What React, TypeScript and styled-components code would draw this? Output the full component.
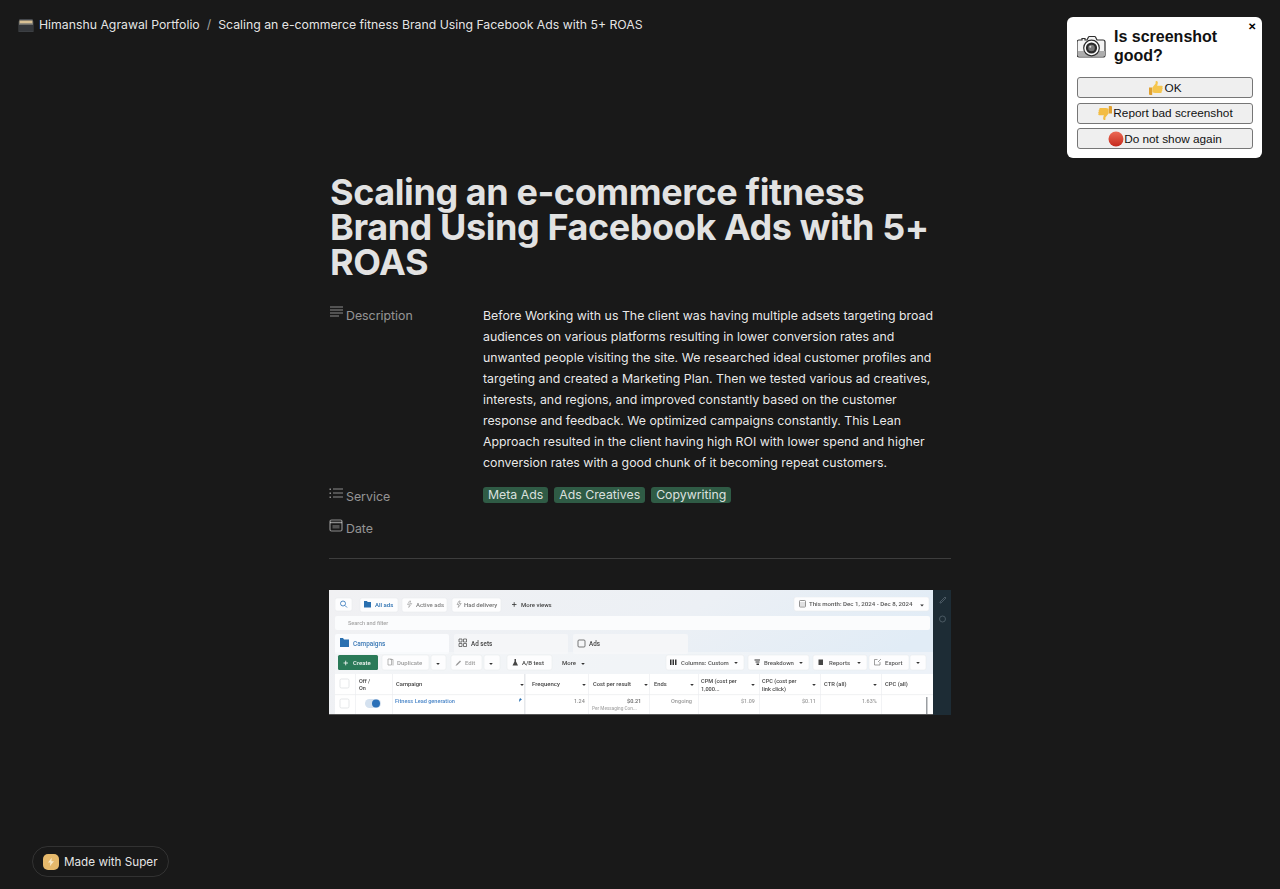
import React from "react";
import styled, { createGlobalStyle } from "styled-components";

const Global = createGlobalStyle`
  html, body { margin: 0; padding: 0; background: #191919; }
  body { min-height: 889px; font-family: Inter, "Liberation Sans", sans-serif; color: rgba(255,255,255,.87); overflow: hidden; }
`;

const Page = styled.div`
  height: 889px;
  display: flex;
  flex-direction: column;
  position: relative;
`;

const TopBar = styled.header`
  display: flex;
  align-items: center;
  height: 48px;
  padding-left: 18px;
  font-size: 12.28px;
  color: rgba(255, 255, 255, 0.9);
  white-space: nowrap;
`;

const Crumb = styled.span`
  margin-left: 5px;
`;

const Slash = styled.span`
  margin: 0 7px;
  color: rgba(255, 255, 255, 0.6);
`;

const Main = styled.main`
  width: 622px;
  margin: 0 0 0 329px;
  padding-top: 127px;
`;

const Title = styled.h1`
  margin: 0 0 24px;
  padding-left: 1px;
  font-size: 36px;
  line-height: 35px;
  font-weight: 700;
  color: rgba(255, 255, 255, 0.88);
  letter-spacing: -0.42px;
`;

const PropRow = styled.div<{ $mb: number }>`
  display: grid;
  grid-template-columns: 154px 1fr;
  margin-bottom: ${(p) => p.$mb}px;
`;

const PropLabel = styled.div`
  display: flex;
  align-items: flex-start;
  gap: 3px;
  padding-top: 1px;
  font-size: 12.35px;
  line-height: 21px;
  color: rgba(255, 255, 255, 0.55);
`;

const PropIcon = styled.svg`
  width: 14px;
  height: 14px;
  flex: none;
  margin-top: 1px;
  color: rgba(255, 255, 255, 0.5);
`;

const PropText = styled.div`
  padding-top: 0.5px;
  font-size: 12.33px;
  line-height: 21px;
  color: rgba(255, 255, 255, 0.92);
`;

const Tags = styled.div`
  display: flex;
  gap: 6px;
  padding-top: 2.5px;
`;

const Tag = styled.span`
  height: 16px;
  display: flex;
  align-items: center;
  padding: 0 5px;
  border-radius: 3px;
  background: #2f5b45;
  color: rgba(255, 255, 255, 0.84);
  font-size: 12.3px;
  line-height: 16px;
`;

const Divider = styled.hr`
  margin: 0 0 31px;
  border: 0;
  height: 1px;
  background: rgba(255, 255, 255, 0.16);
`;

const Shot = styled.svg`
  display: block;
  width: 622px;
  height: 125px;
`;

const Pill = styled.div`
  position: absolute;
  left: 32px;
  top: 846px;
  box-sizing: border-box;
  height: 31px;
  width: 137px;
  display: flex;
  align-items: center;
  gap: 5px;
  padding-left: 10px;
  border: 1px solid rgba(255, 255, 255, 0.11);
  border-radius: 16px;
  font-size: 11.7px;
  white-space: nowrap;
  color: rgba(255, 255, 255, 0.9);
`;

const Bolt = styled.span`
  width: 16px;
  height: 16px;
  display: flex;
  align-items: center;
  justify-content: center;
  border-radius: 5px;
  background: #e6b96c;
`;

const Popup = styled.aside`
  position: absolute;
  left: 1067px;
  top: 17px;
  box-sizing: border-box;
  width: 195px;
  height: 141px;
  padding: 9px 9px 0 10px;
  background: #fff;
  border-radius: 6px;
  font-family: "Liberation Sans", Arial, sans-serif;
  color: #000;
`;

const Close = styled.span`
  position: absolute;
  right: 6px;
  top: 4px;
  font-size: 9.5px;
  line-height: 12px;
  font-weight: 700;
`;

const PopHead = styled.div`
  display: flex;
  align-items: center;
  gap: 8px;
  height: 40px;
  margin-bottom: 11px;
`;

const PopTitle = styled.div`
  font-size: 16px;
  line-height: 19px;
  font-weight: 700;
  color: #111;
`;

const PopButton = styled.button`
  display: flex;
  align-items: center;
  justify-content: center;
  box-sizing: border-box;
  width: 176px;
  height: 21px;
  margin: 0 0 4.5px;
  padding: 0;
  background: #efefef;
  border: 1px solid #767676;
  border-radius: 3px;
  font-family: inherit;
  font-size: 11.8px;
  color: #111;
`;

const Emoji = styled.svg`
  width: 16px;
  height: 16px;
  flex: none;
`;

const ThumbUp = () => (
  <Emoji viewBox="0 0 16 16">
    <path d="M1 7.500h3.200v7.500H2a1 1 0 0 1-1-1z" fill="#e0a030" />
    <path
      d="M4.400 7.500 7.600 3.600V1.500c0-.8 1.900-.8 2.200.6.200 1.200-.4 2.800-.7 3.700h4.600c1.200 0 1.400 1.500.5 1.900.8.500.6 1.700-.2 1.900.6.500.4 1.600-.4 1.800.4.600.1 1.500-.8 1.500H7.200c-1 0-1.800-.5-2.800-.7z"
      fill="#f5c64f"
    />
  </Emoji>
);

const ThumbDown = () => (
  <Emoji viewBox="0 0 16 16">
    <path d="M15 8.500h-3.200V1H14a1 1 0 0 1 1 1z" fill="#e0a030" />
    <path
      d="M11.600 8.500 8.400 12.400v2.100c0 .8-1.900.8-2.200-.6-.2-1.200.4-2.800.7-3.700H2.300c-1.200 0-1.400-1.500-.5-1.900-.8-.5-.6-1.700.2-1.900-.6-.5-.4-1.600.4-1.800-.4-.6-.1-1.500.8-1.500h5.600c1 0 1.800.5 2.800.7z"
      fill="#f3bd45"
    />
  </Emoji>
);

const T = styled.text`
  font-family: Roboto, "Liberation Sans", sans-serif;
  font-weight: 500;
`;

type Lbl = [number, number, string, number, string];

const labels: Lbl[] = [
  [46, 16.5, "All ads", 6, "#2a6fb0"],
  [87, 16.5, "Active ads", 6, "#808080"],
  [135, 16.5, "Had delivery", 6, "#707070"],
  [192, 16.5, "More views", 6, "#444"],
  [19, 35, "Search and filter", 5.5, "#a5a5a5"],
  [24, 55.5, "Campaigns", 6.4, "#3a78b5"],
  [142, 56, "Ad sets", 6.3, "#444"],
  [260, 56, "Ads", 6.3, "#444"],
  [24, 75, "Create", 6, "#f2f8f4"],
  [68, 75, "Duplicate", 6, "#9c9c9c"],
  [136, 75, "Edit", 6, "#a0a0a0"],
  [193, 75, "A/B test", 6, "#444"],
  [233, 75, "More", 6, "#444"],
  [30, 92.5, "Off /", 5.5, "#444"],
  [30, 100, "On", 5.5, "#444"],
  [67, 96, "Campaign", 5.8, "#444"],
  [203, 96, "Frequency", 6, "#444"],
  [264, 96, "Cost per result", 5.8, "#444"],
  [325, 96, "Ends", 5.8, "#444"],
  [372, 92.5, "CPM (cost per", 5.6, "#444"],
  [372, 100.5, "1,000...", 5.6, "#444"],
  [433, 92.5, "CPC (cost per", 5.6, "#444"],
  [433, 100.5, "link click)", 5.6, "#444"],
  [495, 96, "CTR (all)", 5.8, "#444"],
  [556, 96, "CPC (all)", 5.8, "#444"],
  [66, 112.5, "Fitness Lead generation", 5.6, "#4a86c8"],
  [245, 112.5, "1.24", 5.4, "#888"],
  [298, 112.5, "$0.21", 5.6, "#666"],
  [263, 119.8, "Per Messaging Con...", 4.7, "#aaa"],
  [342, 112.5, "Ongoing", 5.6, "#999"],
  [412, 112.5, "$1.09", 5.4, "#999"],
  [473, 112.5, "$0.11", 5.4, "#999"],
  [533, 112.5, "1.63%", 5.4, "#999"],
  [480, 16, "This month: Dec 1, 2024 - Dec 8, 2024", 6.1, "#555"],
  [352, 75, "Columns: Custom", 6, "#555"],
  [435, 75, "Breakdown", 6, "#555"],
  [500, 75, "Reports", 6, "#555"],
  [556, 75, "Export", 6, "#555"],
];

const buttons: [number, number, number, number][] = [
  [6, 8, 17, 13],
  [31, 8, 38, 14],
  [73, 8, 45, 14],
  [123, 8, 49, 14],
  [53, 65, 47, 15],
  [102, 65, 15, 15],
  [122, 65, 31, 15],
  [155, 65, 16, 15],
  [178, 65, 45, 15],
  [465, 7, 135, 14],
  [337, 65, 78, 15],
  [419, 65, 61, 15],
  [484, 65, 54, 15],
  [540, 65, 40, 15],
  [581, 65, 16, 15],
];

const carets: [number, number][] = [
  [109, 73], [162, 73], [254, 73], [593, 14.5], [407, 72], [472, 72], [530, 72], [589, 72],
  [193, 94], [255, 94], [317, 94], [363, 94], [424, 94], [485, 94], [546, 94],
];

const Screenshot = () => (
  <Shot viewBox="0 0 622 125">
    <defs>
      <linearGradient id="bg" x1="0" x2="1" y1="0" y2="0.3">
        <stop offset="0" stopColor="#f1f1f3" />
        <stop offset="0.6" stopColor="#ecf0f5" />
        <stop offset="1" stopColor="#e1ecf6" />
      </linearGradient>
      <filter id="soft" x="0" y="0" width="100%" height="100%">
        <feGaussianBlur stdDeviation="0.35" />
      </filter>
    </defs>
    <rect width="604" height="124" fill="url(#bg)" />
    <rect x="604" width="18" height="125" fill="#1d2c35" />
    <rect x="0" y="124" width="604" height="1" fill="#555" />
    <g filter="url(#soft)">
      <rect x="6" y="26" width="595" height="14" rx="2" fill="#fbfcfd" />
      <rect x="6" y="44" width="114" height="20" rx="2" fill="#fbfcfe" />
      <rect x="125" y="44" width="114" height="20" rx="2" fill="#f5f6f8" />
      <rect x="244" y="44" width="115" height="20" rx="2" fill="#f5f6f8" />
      <rect x="6" y="62" width="598" height="22" fill="#f6f8fa" opacity="0.55" />
      <rect x="6" y="84" width="598" height="40" fill="#fff" />
      <rect x="6" y="104.5" width="598" height="0.6" fill="#e6e8ea" />
      {[26, 63, 259, 320, 369, 430, 491, 552].map((x) => (
        <rect key={x} x={x} y="84" width="0.6" height="40" fill="#eaecee" />
      ))}
      <rect x="195" y="84" width="1.5" height="40" fill="#e6e8eb" />
      {buttons.map(([x, y, w, h]) => (
        <rect key={`${x}-${y}`} x={x} y={y} width={w} height={h} rx="2" fill="#fdfdfe" stroke="#e6e8ea" strokeWidth="0.5" />
      ))}
      <rect x="9" y="65" width="40" height="15" rx="1.5" fill="#2c7a58" />
      <rect x="11" y="89" width="9" height="9" rx="1.5" fill="#fff" stroke="#d5d7da" strokeWidth="0.6" />
      <rect x="11" y="109" width="9" height="9" rx="1.5" fill="#fff" stroke="#d5d7da" strokeWidth="0.6" />
      <rect x="36" y="109" width="16" height="9" rx="4.5" fill="#d4e1ef" />
      <circle cx="47" cy="113.5" r="4" fill="#2a70b8" />
      <circle cx="14" cy="13.500" r="2.500" fill="none" stroke="#2a70b8" strokeWidth="0.8" />
      <path d="M16 15.500l2 2" stroke="#2a70b8" strokeWidth="0.8" />
      <path d="M35 11h2.800l1 1H42v5.500h-7z" fill="#2a6fb0" />
      <path d="M80.500 11 78.500 14.500h2l-.8 3 3-4h-2l1-2.500z" fill="none" stroke="#888" strokeWidth="0.5" />
      <path d="M130 11 128 14.500h2l-.8 3 3-4h-2l1-2.500z" fill="none" stroke="#777" strokeWidth="0.5" />
      <path d="M183 14.500h4.500M185.200 12.200v4.600" stroke="#333" strokeWidth="0.8" />
      <path d="M11 48h3l1 1.500h5V57h-9z" fill="#2a6fb0" />
      <path d="M130 49h3v3h-3zM134.500 49h3v3h-3zM130 53.500h3v3h-3zM134.500 53.500h3v3h-3z" fill="none" stroke="#444" strokeWidth="0.7" />
      <rect x="249" y="50" width="7" height="7" rx="1" fill="none" stroke="#444" strokeWidth="0.7" />
      <path d="M14.500 73h4.500M16.700 70.700v4.600" stroke="#fff" strokeWidth="0.8" />
      <path d="M59 69h3.500v6H59zM61 69.500h3v6" fill="none" stroke="#999" strokeWidth="0.7" />
      <path d="M126.500 76l1-2 3.500-3.500 1 1-3.500 3.500z" fill="#999" />
      <path d="M185.500 69h1.500v2.500l2 4h-5.500l2-4z" fill="#444" />
      <path d="M341 69.500h1.500v5.500H341zM343.500 69.500H345v5.500h-1.500zM346 69.500h1.500v5.500H346z" fill="#333" />
      <path d="M425.500 69.500h5.500v1h-5.500zM426.500 71.500h4v1h-4zM427.500 73.500h2.500v1.500h-2.500z" fill="#333" />
      <path d="M489.500 69.500h4.500v5.500h-4.500z" fill="#444" />
      <path d="M551 72v3h-5.500v-5.500h3M549 72l3-3" fill="none" stroke="#777" strokeWidth="0.7" />
      <rect x="470.500" y="10.500" width="6" height="6.500" rx="0.8" fill="none" stroke="#777" strokeWidth="0.8" />
      <path d="M471 13h5M471 15h5" stroke="#888" strokeWidth="0.5" />
      <path d="M190.500 108.500l1.500 1.500-2 2zM191 108l2 1.500-2 1z" fill="#2a6fb0" />
      {carets.map(([x, y]) => (
        <path key={`${x}-${y}`} d={`M${x - 1.8} ${y}h3.600l-1.800 2z`} fill="#333" />
      ))}
      {labels.map(([x, y, s, size, c]) => (
        <T key={`${s}-${x}-${y}`} x={x} y={y} fontSize={size} fill={c}>
          {s}
        </T>
      ))}
      <path d="M611 12l5-5 1 1-5 5h-1z" fill="none" stroke="#5d6c75" strokeWidth="0.7" />
      <circle cx="613.500" cy="29" r="3" fill="none" stroke="#5d6c75" strokeWidth="0.7" />
      <rect x="597" y="107" width="1.500" height="17" fill="#9a9ea2" />
    </g>
  </Shot>
);

const BoxIcon = () => (
  <svg width="16" height="16" viewBox="0 0 16 16" style={{ flex: "none", marginTop: 1 }}>
    <path d="M1.500 2h13l1 3v9.500a.5.5 0 0 1-.5.500H1a.5.5 0 0 1-.5-.5V5z" fill="#45484d" />
    <rect x="1.500" y="3.500" width="13" height="3" fill="#d8c094" />
    <rect x="1" y="6.500" width="14" height="1" fill="#9a958a" />
    <rect x="1" y="8" width="14" height="6.500" fill="#34373b" />
  </svg>
);

const Camera = () => (
  <svg width="29" height="23" viewBox="0 0 29 23" style={{ flex: "none" }}>
    <path
      d="M2.500 5H5V3.500h3V5h2l1.500-3a1 1 0 0 1 1-.5h5a1 1 0 0 1 1 .5l1.500 3h6a2 2 0 0 1 2 2v13a2 2 0 0 1-2 2h-24a2 2 0 0 1-2-2V7a2 2 0 0 1 2-2z"
      fill="#f4f4f4"
      stroke="#2e2e2e"
      strokeWidth="1.200"
    />
    <path d="M1 16h27v4a1.500 1.500 0 0 1-1.500 1.500h-24A1.500 1.500 0 0 1 1 20z" fill="#adadad" />
    <circle cx="14.500" cy="13" r="7.800" fill="#fff" stroke="#2e2e2e" strokeWidth="1.200" />
    <circle cx="14.500" cy="13" r="5.600" fill="#2b2b2b" />
    <circle cx="14.500" cy="13" r="3.300" fill="#777" />
    <circle cx="13.300" cy="11.800" r="1" fill="#ddd" />
  </svg>
);

export default function App() {
  return (
    <Page>
      <Global />
      <TopBar>
        <BoxIcon />
        <Crumb>Himanshu Agrawal Portfolio</Crumb>
        <Slash>/</Slash>
        <span>Scaling an e-commerce fitness Brand Using Facebook Ads with 5+ ROAS</span>
      </TopBar>
      <Main>
        <Title>Scaling an e-commerce fitness Brand Using Facebook Ads with 5+ ROAS</Title>
        <PropRow $mb={12}>
          <PropLabel>
            <PropIcon viewBox="0 0 14 14">
              <path d="M1 1h13M1 4h13M1 7h13M1 10h9" stroke="currentColor" strokeWidth="1" fill="none" />
            </PropIcon>
            Description
          </PropLabel>
          <PropText>
            Before Working with us The client was having multiple adsets targeting broad audiences on various platforms resulting in lower conversion rates and unwanted people visiting the site. We researched ideal customer profiles and targeting and created a Marketing Plan. Then we tested various ad creatives, interests, and regions, and improved constantly based on the customer response and feedback. We optimized campaigns constantly. This Lean Approach resulted in the client having high ROI with lower spend and higher conversion rates with a good chunk of it becoming repeat customers.
          </PropText>
        </PropRow>
        <PropRow $mb={10.5}>
          <PropLabel>
            <PropIcon viewBox="0 0 14 14">
              <path d="M4 2h10M4 6h10M4 10h10" stroke="currentColor" strokeWidth="1" fill="none" />
              <path d="M0.500 1.500h1.500v1.500H.5zM.5 5.500h1.500V7H.5zM.5 9.500h1.500V11H.5z" fill="currentColor" />
            </PropIcon>
            Service
          </PropLabel>
          <Tags>
            <Tag>Meta Ads</Tag>
            <Tag>Ads Creatives</Tag>
            <Tag>Copywriting</Tag>
          </Tags>
        </PropRow>
        <PropRow $mb={19}>
          <PropLabel>
            <PropIcon viewBox="0 0 14 14">
              <rect x="1" y="1" width="12" height="11" rx="1.500" fill="none" stroke="currentColor" strokeWidth="1.200" />
              <path d="M1 3.500h12" stroke="currentColor" strokeWidth="1.500" />
              <path d="M3.500 6h7v3.500h-7z" fill="currentColor" opacity=".5" />
            </PropIcon>
            Date
          </PropLabel>
          <div />
        </PropRow>
        <Divider />
        <Screenshot />
      </Main>
      <Pill>
        <Bolt>
          <svg width="10" height="10" viewBox="0 0 10 10">
            <path d="M5.800.8 2 5.600h2.400L3.900 9.200 8 4.200H5.400z" fill="#f8e9c8" />
          </svg>
        </Bolt>
        Made with Super
      </Pill>
      <Popup>
        <Close>✕</Close>
        <PopHead>
          <Camera />
          <PopTitle>
            Is screenshot
            <br />
            good?
          </PopTitle>
        </PopHead>
        <PopButton>
          <ThumbUp />
          OK
        </PopButton>
        <PopButton>
          <ThumbDown />
          Report bad screenshot
        </PopButton>
        <PopButton>
          <Emoji viewBox="0 0 16 16">
            <defs>
              <linearGradient id="red" x1="0" x2="0" y1="0" y2="1">
                <stop offset="0" stopColor="#ec6a55" />
                <stop offset="1" stopColor="#c5281c" />
              </linearGradient>
            </defs>
            <circle cx="8" cy="8" r="7.500" fill="url(#red)" />
          </Emoji>
          Do not show again
        </PopButton>
      </Popup>
    </Page>
  );
}
